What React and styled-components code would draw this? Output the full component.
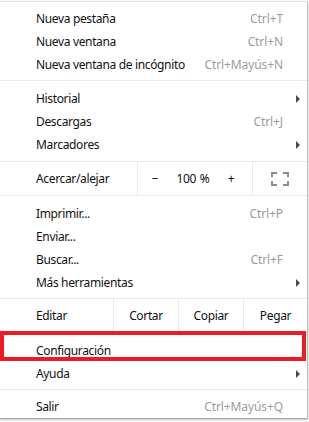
import React from "react";
import styled, { createGlobalStyle } from "styled-components";

const GlobalStyle = createGlobalStyle`
  html, body {
    margin: 0;
    padding: 0;
    background: #ffffff;
  }
  body {
    font-family: "Segoe UI", "Noto Sans", "Open Sans", sans-serif;
    font-size: 12px;
    letter-spacing: -0.35px;
    color: #111;
  }
`;

const Page = styled.div`
  padding-top: 1px;
  width: 309px;
  height: 421px;
  overflow: hidden;
  position: relative;
`;

const Menu = styled.div`
  position: relative;
  width: 307px;
  border-top: 1px solid #e4e4e4;
  border-right: 1px solid #bdbdbd;
  border-bottom: 1px solid #a8a8a8;
  padding-top: 5px;
  background: #fff;
  box-shadow: 0 1px 2px rgba(0, 0, 0, 0.25);
`;

const Item = styled.div`
  display: grid;
  grid-template-columns: 1fr auto 24px;
  align-items: center;
  height: 23px;
  line-height: 23px;
  padding-left: 36px;
  white-space: nowrap;
`;

const Label = styled.span`
  color: #111;
`;

const Shortcut = styled.span`
  color: #9b9b9b;
  letter-spacing: -0.1px;
`;

const ArrowCell = styled.span`
  display: flex;
  align-items: center;
  padding-left: 13px;
`;

const Arrow = styled.span`
  width: 0;
  height: 0;
  border-top: 4px solid transparent;
  border-bottom: 4px solid transparent;
  border-left: 4px solid #4a4a4a;
`;

const Separator = styled.div`
  height: 1px;
  background: #e9e9e9;
  margin: ${(p) => p.$top ?? 4}px 0 ${(p) => p.$bottom ?? 6}px;
`;

const SplitRow = styled.div`
  display: grid;
  grid-template-columns: ${(p) => p.$cols};
  height: 33px;
  align-items: stretch;
  white-space: nowrap;
`;

const RowLabel = styled.div`
  display: flex;
  align-items: center;
  padding-left: 36px;
`;

const Cell = styled.div`
  display: flex;
  align-items: center;
  justify-content: center;
  border-left: 1px solid #e9e9e9;
`;

const ZoomControls = styled.div`
  display: grid;
  grid-template-columns: 34px 42px 34px;
  align-items: center;
  border-left: 1px solid #e9e9e9;
`;

const ZoomButton = styled.span`
  text-align: center;
  font-size: 12px;
`;

const ZoomValue = styled.span`
  text-align: center;
  word-spacing: 1px;
`;

const Highlight = styled.div`
  position: absolute;
  left: 0;
  top: 331px;
  width: 306px;
  height: 30px;
  box-sizing: border-box;
  border: 4px solid #ed1c24;
  pointer-events: none;
`;

const FullscreenIcon = () => (
  <svg width="18" height="14" viewBox="0 0 18 14" fill="none">
    <g stroke="#8c8c8c" strokeWidth="2">
      <path d="M1 5V1H6" />
      <path d="M12 1H17V5" />
      <path d="M17 9V13H12" />
      <path d="M6 13H1V9" />
    </g>
  </svg>
);

const MenuItem = ({ label, shortcut, submenu }) => (
  <Item>
    <Label>{label}</Label>
    <Shortcut>{shortcut}</Shortcut>
    <ArrowCell>{submenu && <Arrow />}</ArrowCell>
  </Item>
);

export default function App() {
  return (
    <>
      <GlobalStyle />
      <Page>
        <Menu>
          <MenuItem label="Nueva pestaña" shortcut="Ctrl+T" />
          <MenuItem label="Nueva ventana" shortcut="Ctrl+N" />
          <MenuItem label="Nueva ventana de incógnito" shortcut="Ctrl+Mayús+N" />
          <Separator />
          <MenuItem label="Historial" submenu />
          <MenuItem label="Descargas" shortcut="Ctrl+J" />
          <MenuItem label="Marcadores" submenu />
          <Separator $top={5} $bottom={0} />
          <SplitRow $cols="137px 115px 1fr">
            <RowLabel>Acercar/alejar</RowLabel>
            <ZoomControls>
              <ZoomButton>−</ZoomButton>
              <ZoomValue>100 %</ZoomValue>
              <ZoomButton>+</ZoomButton>
            </ZoomControls>
            <Cell>
              <FullscreenIcon />
            </Cell>
          </SplitRow>
          <Separator $top={0} $bottom={6} />
          <MenuItem label="Imprimir..." shortcut="Ctrl+P" />
          <MenuItem label="Enviar..." />
          <MenuItem label="Buscar..." shortcut="Ctrl+F" />
          <MenuItem label="Más herramientas" submenu />
          <Separator $bottom={0} />
          <SplitRow $cols="113px 65px 65px 1fr">
            <RowLabel>Editar</RowLabel>
            <Cell>Cortar</Cell>
            <Cell>Copiar</Cell>
            <Cell>Pegar</Cell>
          </SplitRow>
          <Separator $top={0} $bottom={6} />
          <MenuItem label="Configuración" />
          <MenuItem label="Ayuda" submenu />
          <Separator $top={4} $bottom={5} />
          <MenuItem label="Salir" shortcut="Ctrl+Mayús+Q" />
        </Menu>
        <Highlight />
      </Page>
    </>
  );
}
